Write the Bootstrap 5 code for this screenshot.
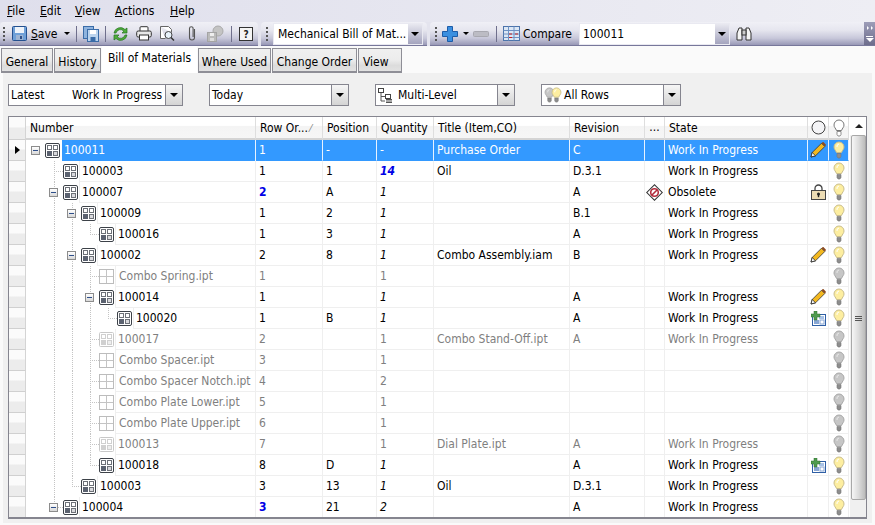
<!DOCTYPE html>
<html lang="en">
<head>
<meta charset="utf-8">
<title>Bill of Materials</title>
<link href="https://cdn.jsdelivr.net/npm/bootstrap@5.3.0/dist/css/bootstrap.min.css" rel="stylesheet">
<style>
html,body{margin:0;height:525px;overflow:hidden}
body{font-family:"DejaVu Sans Condensed","DejaVu Sans",sans-serif;font-stretch:condensed;font-size:12px;line-height:16px;color:#000;background:#fafafa}
.appmenu{height:22px;background:linear-gradient(90deg,#dfdfec,#eeeef4);padding-left:7px;gap:0}
.appmenu span{display:block}
.mi1{width:33px}.mi2{width:35px}.mi3{width:40px}.mi4{width:55px}
.toolrow{height:24px;background:#e4e4ee;gap:3px}
.toolseg{height:24px;border-radius:4px 4px 0 0;background:linear-gradient(#f0f0f6 0,#e6e6ef 35%,#c8c8da 70%,#9898b6 100%);border-bottom:1px solid #77779a;padding-left:3px}
.sg1{width:258px}.sg2{width:166px}.sg3{flex:1 1 0;border-radius:4px 0 0 0}
.grip{width:2px;height:14px;background-image:repeating-linear-gradient(#555 0 2px,transparent 2px 4px);flex:none}
.tsep{width:1px;height:16px;background:#6f6f8c;flex:none}
.tcombo{background:#fff;height:22px;display:flex;align-items:center;padding-left:4px;border:1px solid #e9e9f1}
.tc1{width:150px;margin-left:5px}.tc2{width:151px;margin-left:7px;padding-left:3px}
.tarrow{margin-left:auto;width:14px;height:20px;background:linear-gradient(#e8e8f0,#a4a4be);display:flex;align-items:center;justify-content:center}
.tri{width:0;height:0;border-left:4px solid transparent;border-right:4px solid transparent;border-top:4px solid #000;display:block}
.tri2{border-left-width:3px;border-right-width:3px;border-top-width:3px}
.g2{margin-left:2px}.g3{margin-left:3px}.g4{margin-left:4px}.g5{margin-left:5px}.g6{margin-left:6px}.g7{margin-left:7px}.g8{margin-left:8px}.g10{margin-left:10px}.g12{margin-left:12px}
.endcap{margin-left:auto;width:11px;height:23px;background:linear-gradient(#9d9db8,#6d6d8c);display:flex;flex-direction:column;align-items:center;padding:4px 0 3px}
.endcap .chev{display:flex;gap:2px;margin-bottom:auto}
.endcap .chev em{display:block;width:0;height:0;border-top:2px solid transparent;border-bottom:2px solid transparent;border-left:2px solid #fff}
.endcap i{display:block;width:7px;height:1px;background:#fff;margin-bottom:1px}
.endcap b{display:block;width:0;height:0;border-left:4px solid transparent;border-right:4px solid transparent;border-top:4px solid #fff}
.bomtabs{height:27px;padding-left:1px;border:0;gap:1px;background:#fafafa}
.bomtabs .nav-link{height:25px;margin:2px 0 0;padding:5px 0 0;text-align:center;border:1px solid #8e8e96;border-width:1px 1px 2px;border-radius:0;color:#000;font-size:12px;line-height:16px;background:linear-gradient(#f0f0f0 0,#ececec 50%,#dcdcdc 75%,#e2e2e2 100%)}
.bomtabs .nav-link.active{height:27px;margin-top:0;background:#fff;border:0;padding-top:4px;color:#000}
.bomtabs .nav-link.tw6{text-align:left;padding-left:4px}
.tw1{width:52px}.tw2{width:47px}.tw3{width:95px}.tw4{width:73px}.tw5{width:85px}.tw6{width:44px}
.mainpane{height:450px;margin:0 3px;padding:0 0 0 5px;background:#f0f0f0}
.filterrow{height:43px;padding-top:11px}
.fcombo{height:22px;background:#fff;border:1px solid #85858f;display:flex;align-items:center;padding-left:2px;width:140px;flex:none}
.fc1{width:175px}
.fspace{margin-left:26px}
.flab{width:61px}
.farrow{margin-left:auto;width:17px;height:20px;border-left:1px solid #85858f;background:linear-gradient(#f6f6f6,#d4d4d4);display:flex;align-items:center;justify-content:center}
.gridbox{width:859px;height:403px;border:1px solid #85858f;border-bottom-width:2px;background:#fff;overflow:hidden}
.bom{table-layout:fixed;width:840px;margin:0;border-collapse:separate;border-spacing:0;--bs-table-bg:transparent;--bs-table-color:#000;font-size:12px}
.bom>:not(caption)>*>*{padding:1px 0 0 3px;border:0;border-right:1px solid #efefef;border-bottom:1px solid #efefef;height:21px;line-height:19px;white-space:nowrap;overflow:hidden;box-shadow:none}
.bom>thead>tr>th{font-weight:400;height:22px;line-height:19px;background:linear-gradient(#fff 0,#fff 40%,#f4f4f4 45%,#f6f6f6 100%);border-right:1px solid #dedede;border-bottom:2px solid #d4d4d4;padding:2px 0 0 4px}
.bom td.rowhd,.bom th.rowhd{padding:0;background:linear-gradient(#fbfbfb 0,#fbfbfb 45%,#ececec 50%,#ececec 100%);border-right:1px solid #d4d4d4;border-bottom:1px solid #d0d0d0;text-align:center}
.bom td.numc{padding:0;border-bottom:0}
.bom td.icn,.bom th.icn{padding:0;text-align:center;vertical-align:middle}
.treecell{display:flex;height:21px;align-items:stretch;padding-left:1px}
.gut{width:18px;flex:none;background-repeat:no-repeat;display:flex;align-items:center;justify-content:center}
.gv{background-image:repeating-linear-gradient(#c4c4c4 0 1px,transparent 1px 2px);background-size:1px 100%;background-position:9px 0}
.gt{background-image:repeating-linear-gradient(#c4c4c4 0 1px,transparent 1px 2px),repeating-linear-gradient(90deg,#c4c4c4 0 1px,transparent 1px 2px);background-size:1px 100%,9px 1px;background-position:9px 0,9px 10px}
.gl{background-image:repeating-linear-gradient(#c4c4c4 0 1px,transparent 1px 2px),repeating-linear-gradient(90deg,#c4c4c4 0 1px,transparent 1px 2px);background-size:1px 11px,9px 1px;background-position:9px 0,9px 10px}
.expd{width:9px;height:9px;border:1px solid #8c8c8c;background:linear-gradient(#fff,#d8d8d8);display:flex;align-items:center;justify-content:center;margin:0 1px 0 0}
.expd i{display:block;width:5px;height:1px;background:#2e4f8a}
.ticon{flex:none;align-self:center}
.tname{flex:1 1 0;min-width:0;margin-left:1px;padding:1px 0 0 2px;border-left:1px solid #efefef;border-bottom:1px solid #efefef;line-height:19px;overflow:hidden}
.tname.fnm{padding-left:3px}
.selrow>td{background:#3399ff;color:#fff;border-right-color:#e8f2ff!important;border-bottom-color:#3399ff!important}
.selrow>td.rowhd{color:#000;background:linear-gradient(#fbfbfb 0,#fbfbfb 45%,#ececec 50%,#ececec 100%);border-bottom-color:#d0d0d0!important;border-right-color:#d4d4d4!important}
.selrow>td.numc{background:#fff}
.selrow .tname{background:#3399ff;color:#fff;border-color:#3399ff;margin-left:2px;padding-left:2px;border-left:0}
.dim{color:#7f7f7f}
.dimrow>td,.dimrow .tname{color:#7f7f7f}
.blu{color:#0000e6;font-weight:700}
.qi{font-style:italic}
.qb{font-style:italic;font-weight:700;color:#0000e6}
.arrowr{display:inline-block;width:0;height:0;border-top:4px solid transparent;border-bottom:4px solid transparent;border-left:5px solid #000;vertical-align:middle}
.scrollbar{width:17px;height:400px;margin-left:1px;background:#f0f0f0;flex:none}
.sbtn{height:18px;display:flex;align-items:center;justify-content:center;background:#fff}
.uptri{width:0;height:0;border-left:4px solid transparent;border-right:4px solid transparent;border-bottom:4px solid #222;display:block}
.sthumb{height:365px;margin:0 1px;background:linear-gradient(90deg,#f6f6f6,#dcdcdc 50%,#bcbcbc);border:1px solid #a8a8a8;border-radius:2px;display:flex;flex-direction:column;align-items:center;padding-top:180px}
.sthumb i{display:block;width:7px;height:1px;background:#555;margin-bottom:1px}
</style>
</head>
<body>
<svg width="0" height="0" class="d-none">
<defs>
<symbol id="elem" viewBox="0 0 15 15"><rect x=".5" y=".5" width="14" height="14" rx="1.5" fill="#fff" stroke="#3c4148"/><rect x="2.5" y="2.5" width="4" height="4" fill="#fff" stroke="#6d7178"/><rect x="8.5" y="2.5" width="4" height="4" fill="#fff" stroke="#6d7178"/><rect x="2" y="8" width="5" height="5" fill="#5b6270"/><rect x="8.5" y="8.5" width="4" height="4" fill="#d8d8dc" stroke="#6d7178"/></symbol>
<symbol id="elemg" viewBox="0 0 15 15"><rect x=".5" y=".5" width="14" height="14" rx="1" fill="#fff" stroke="#c8c8c8"/><rect x="2.5" y="2.5" width="4" height="4" fill="#fff" stroke="#d0d0d0"/><rect x="8.5" y="2.5" width="4" height="4" fill="#fff" stroke="#d0d0d0"/><rect x="2" y="8" width="5" height="5" fill="#d0d0d0"/><rect x="8.5" y="8.5" width="4" height="4" fill="#eee" stroke="#d0d0d0"/></symbol>
<symbol id="filei" viewBox="0 0 15 15"><rect x=".5" y=".5" width="14" height="14" fill="#fff" stroke="#bcbcbc"/><path d="M7.5 1v13M1 7.5h13" stroke="#c4c4c4"/></symbol>
<symbol id="bulb" viewBox="0 0 12 18"><path d="M6 1a5 5 0 0 0-5 5c0 2.200 1.700 3.300 2.500 5.500h5C9.300 9.300 11 8.200 11 6a5 5 0 0 0-5-5z" fill="#fdeea0" stroke="#c9bd8c"/><path d="M4 12.500h4v3l-1 1.500H5l-1-1.500z" fill="#8d8d8d" stroke="#777" stroke-width=".6"/><path d="M4 6a2.500 2.500 0 0 1 2-3" stroke="#fff" fill="none"/></symbol>
<symbol id="bulbg" viewBox="0 0 12 18"><path d="M6 1a5 5 0 0 0-5 5c0 2.200 1.700 3.300 2.500 5.500h5C9.300 9.300 11 8.200 11 6a5 5 0 0 0-5-5z" fill="#c6c6c6" stroke="#a8a8a8"/><path d="M4 12.500h4v3l-1 1.500H5l-1-1.500z" fill="#8d8d8d" stroke="#777" stroke-width=".6"/><path d="M4 6a2.500 2.500 0 0 1 2-3" stroke="#e8e8e8" fill="none"/></symbol>
<symbol id="bulbo" viewBox="0 0 12 18"><path d="M6 1a5 5 0 0 0-5 5c0 2.200 1.700 3.300 2.500 5.500h5C9.300 9.300 11 8.200 11 6a5 5 0 0 0-5-5z" fill="#fff" stroke="#777"/><path d="M4 12.500h4v3l-1 1.500H5l-1-1.500z" fill="#fff" stroke="#666" stroke-width=".7"/></symbol>
<symbol id="pencil" viewBox="0 0 16 16"><path d="M1 15l1.200-4.500L11.500 1.200l3.300 3.300L5.500 13.800z" fill="#f3b81f" stroke="#333" stroke-width=".8"/><path d="M1 15l1.200-4.500 3.300 3.300z" fill="#fff" stroke="#222" stroke-width=".8"/><path d="M11.500 1.200l3.300 3.300 .8-.8c.4-.5.4-1 0-1.500l-1.800-1.800c-.5-.4-1-.4-1.500 0z" fill="#8a4a20"/></symbol>
<symbol id="lock" viewBox="0 0 15 16"><path d="M4 7V4.500a3.500 3.500 0 0 1 7 0V7" fill="none" stroke="#444" stroke-width="1.300"/><rect x=".5" y="6.500" width="14" height="9" fill="#ecdcb4" stroke="#444"/><circle cx="7.500" cy="10" r="1.500" fill="#222"/><rect x="6.800" y="10" width="1.400" height="3.200" fill="#222"/></symbol>
<symbol id="obs" viewBox="0 0 17 17"><rect x="3" y="3" width="11" height="11" transform="rotate(45 8.500 8.500)" fill="#fff" stroke="#333"/><circle cx="8.500" cy="8.500" r="3.800" fill="#fff" stroke="#b22a3a" stroke-width="1.600"/><path d="M6 11l5-5" stroke="#b22a3a" stroke-width="1.600"/></symbol>
<symbol id="addi" viewBox="0 0 15 15"><rect x="1.500" y="3.500" width="13" height="11" fill="#fff" stroke="#2f5fa5"/><rect x="3" y="9" width="5" height="4" fill="#88a6d3"/><rect x="9" y="9" width="4" height="4" fill="#fff" stroke="#88a6d3"/><rect x="8" y="5" width="5" height="3" fill="#a8c2e6"/><path d="M3 0h3v3h3v3H6v3H3V6H0V3h3z" fill="#4f9a4f" stroke="#2f6f2f" stroke-width=".5"/></symbol>
<symbol id="mlv" viewBox="0 0 15 15"><path d="M3 5v8h4M3 8.500h4" fill="none" stroke="#555"/><rect x=".5" y=".5" width="5" height="4" fill="#fff" stroke="#444"/><rect x="7.500" y="6.500" width="5" height="4" fill="#fff" stroke="#444"/><path d="M8 13h6M8 11.500h6M8 14.500h6" stroke="#555"/></symbol>
</defs>
</svg>

<div class="appmenu d-flex align-items-center">
<span class="mi1"><u>F</u>ile</span><span class="mi2"><u>E</u>dit</span><span class="mi3"><u>V</u>iew</span><span class="mi4"><u>A</u>ctions</span><span><u>H</u>elp</span>
</div>

<div class="toolrow d-flex">
<div class="toolseg sg1 d-flex align-items-center">
<span class="grip"></span>
<svg class="g7" width="15" height="15" viewBox="0 0 15 15"><rect x=".5" y=".5" width="14" height="14" rx="1" fill="#6fa0d8" stroke="#24508f"/><rect x="3" y="1" width="9" height="6" fill="#eef3fa"/><rect x="4" y="9" width="7" height="5" fill="#9fb4d2"/><rect x="8" y="10" width="2" height="3" fill="#2d4f88"/></svg>
<span class="g4"><u>S</u>ave</span>
<span class="tri tri2 g6"></span>
<span class="tsep g6"></span>
<svg class="g6" width="16" height="16" viewBox="0 0 16 16"><rect x=".5" y=".5" width="10" height="12" fill="#8eb3de" stroke="#3a6ca8"/><rect x="4.500" y="3.500" width="11" height="12" fill="#bcd4ee" stroke="#3a6ca8"/><rect x="7" y="4" width="6" height="4" fill="#fff"/><rect x="7.500" y="11" width="5" height="4" fill="#3a6ca8"/></svg>
<span class="tsep g6"></span>
<svg class="g6" width="17" height="16" viewBox="0 0 17 16"><path d="M2 7a6.500 6.500 0 0 1 11-3.500L15 2v5h-5l1.800-1.800A4.500 4.500 0 0 0 4 7z" fill="#4fae3a" stroke="#24701f" stroke-width=".7"/><path d="M15 9A6.500 6.500 0 0 1 4 12.500L2 14V9h5l-1.800 1.800A4.500 4.500 0 0 0 13 9z" fill="#4fae3a" stroke="#24701f" stroke-width=".7"/></svg>
<svg class="g7" width="16" height="15" viewBox="0 0 16 15"><rect x="4" y=".7" width="8" height="5" rx="1" fill="#fff" stroke="#333"/><rect x=".7" y="5" width="14.600" height="6" rx="1.500" fill="#e8e8e8" stroke="#333"/><rect x="3.500" y="9" width="9" height="5" fill="#fff" stroke="#333"/></svg>
<svg class="g8" width="15" height="15" viewBox="0 0 15 15"><path d="M.5.5h8l3 3v3M.5.500v12h5" fill="#fff" stroke="#666"/><circle cx="8.500" cy="9" r="3.500" fill="#e8f2fa" stroke="#444"/><path d="M11 11.500l3 3" stroke="#333" stroke-width="1.500"/></svg>
<svg class="g12" width="10" height="17" viewBox="0 0 10 17"><path d="M7.500 4v8.500a2.500 2.500 0 0 1-5 0V3.500a1.800 1.800 0 0 1 3.600 0V12" fill="none" stroke="#555" stroke-width="1.100"/></svg>
<svg class="g10" width="17" height="17" viewBox="0 0 17 17"><circle cx="11" cy="6" r="5" fill="#c4c4c4" stroke="#aaa"/><rect x=".5" y="7.500" width="9" height="9" fill="#bbb" stroke="#a4a4a4"/><rect x="3" y="8" width="4" height="3" fill="#eee"/><rect x="3" y="13" width="4" height="3" fill="#ddd"/></svg>
<span class="tsep g7"></span>
<svg class="g7" width="14" height="14" viewBox="0 0 14 14"><rect x=".5" y=".5" width="13" height="13" fill="#f4f4f4" stroke="#333"/><text x="7" y="11" text-anchor="middle" font-size="10" font-weight="700" fill="#222">?</text></svg>
</div>
<div class="toolseg sg2 d-flex align-items-center">
<span class="grip g2"></span>
<div class="tcombo tc1">Mechanical Bill of Mat...<span class="tarrow"><span class="tri"></span></span></div>
</div>
<div class="toolseg sg3 d-flex align-items-center">
<span class="grip g2"></span>
<svg class="g5" width="16" height="16" viewBox="0 0 16 16"><path d="M5.500.5h5v5h5v5h-5v5h-5v-5h-5v-5h5z" fill="#3a8fe0" stroke="#1d5ca8"/></svg>
<span class="tri tri2 g5"></span>
<svg class="g4" width="16" height="6" viewBox="0 0 16 6"><rect x=".5" y=".5" width="15" height="5" rx="1" fill="#bcbcc4" stroke="#a8a8b0"/></svg>
<span class="tsep g7"></span>
<svg class="g6" width="17" height="15" viewBox="0 0 17 15"><rect x=".5" y=".5" width="16" height="14" fill="#dce7f5" stroke="#4d74ab"/><path d="M.5 4.500h16M.5 8h16M.5 11.500h16M5.500.5v14M11 .5v14" stroke="#6e92c4"/><path d="M6 8h3M12 8h3M6 11.500h3" stroke="#c82020"/></svg>
<span class="g3">Compare</span>
<div class="tcombo tc2">100011<span class="tarrow"><span class="tri"></span></span></div>
<svg class="g6" width="16" height="16" viewBox="0 0 16 16"><path d="M1 14V7l2-5h3v12zM15 14V7l-2-5h-3v12z" fill="#f4f4f4" stroke="#333"/><rect x="6" y="4" width="4" height="5" fill="#ccc" stroke="#333"/></svg>
<div class="endcap"><span class="chev"><em></em><em></em></span><i></i><b></b></div>
</div>
</div>

<ul class="nav nav-tabs bomtabs">
<li class="nav-item"><a class="nav-link tw1" href="#">General</a></li>
<li class="nav-item"><a class="nav-link tw2" href="#">History</a></li>
<li class="nav-item"><a class="nav-link active tw3" href="#">Bill of Materials</a></li>
<li class="nav-item"><a class="nav-link tw4" href="#">Where Used</a></li>
<li class="nav-item"><a class="nav-link tw5" href="#">Change Order</a></li>
<li class="nav-item"><a class="nav-link tw6" href="#">View</a></li>
</ul>

<div class="mainpane">
<div class="filterrow d-flex">
<div class="fcombo fc1"><span class="flab">Latest</span><span>Work In Progress</span><span class="farrow"><span class="tri"></span></span></div>
<div class="fcombo fspace">Today<span class="farrow"><span class="tri"></span></span></div>
<div class="fcombo fspace"><svg width="15" height="15"><use href="#mlv"/></svg><span class="g5">Multi-Level</span><span class="farrow"><span class="tri"></span></span></div>
<div class="fcombo fspace"><svg width="18" height="16" viewBox="0 0 18 16"><use href="#bulbg" width="11" height="16"/><use href="#bulb" x="7" width="11" height="16"/></svg><span class="g2">All Rows</span><span class="farrow"><span class="tri"></span></span></div>
</div>

<div class="gridbox d-flex">
<table class="table bom">
<colgroup><col style="width:17px"><col style="width:230px"><col style="width:67px"><col style="width:54px"><col style="width:57px"><col style="width:136px"><col style="width:75px"><col style="width:20px"><col style="width:143px"><col style="width:21px"><col style="width:20px"></colgroup>
<thead><tr><th class="rowhd"></th><th>Number</th><th>Row Or...&#8201;<small class="dim">&#8260;</small></th><th>Position</th><th>Quantity</th><th>Title (Item,CO)</th><th>Revision</th><th class="icn">...</th><th>State</th><th class="icn"><svg width="15" height="15" viewBox="0 0 15 15"><circle cx="7.500" cy="7.500" r="6.500" fill="#f4f4f6" stroke="#444"/></svg></th><th class="icn"><svg width="12" height="18"><use href="#bulbo"/></svg></th></tr></thead>
<tbody>
<tr class="selrow"><td class="rowhd"><span class="arrowr"></span></td><td class="numc"><div class="treecell"><span class="gut"><span class="expd"><i></i></span></span><svg class="ticon" width="15" height="15"><use href="#elem"/></svg><div class="tname">100011</div></div></td><td>1</td><td>-</td><td>-</td><td>Purchase Order</td><td>C</td><td></td><td>Work In Progress</td><td class="icn"><svg width="16" height="16"><use href="#pencil"/></svg></td><td class="icn"><svg width="12" height="18"><use href="#bulb"/></svg></td></tr>

<tr><td class="rowhd"></td><td class="numc"><div class="treecell"><span class="gut"></span><span class="gut gt"></span><svg class="ticon" width="15" height="15"><use href="#elem"/></svg><div class="tname">100003</div></div></td><td>1</td><td>1</td><td class="qb">14</td><td>Oil</td><td>D.3.1</td><td></td><td>Work In Progress</td><td class="icn"></td><td class="icn"><svg width="12" height="18"><use href="#bulb"/></svg></td></tr>

<tr><td class="rowhd"></td><td class="numc"><div class="treecell"><span class="gut"></span><span class="gut gv"><span class="expd"><i></i></span></span><svg class="ticon" width="15" height="15"><use href="#elem"/></svg><div class="tname">100007</div></div></td><td class="blu">2</td><td>A</td><td class="qi">1</td><td></td><td>A</td><td class="icn"><svg width="17" height="17"><use href="#obs"/></svg></td><td>Obsolete</td><td class="icn"><svg width="15" height="16"><use href="#lock"/></svg></td><td class="icn"><svg width="12" height="18"><use href="#bulb"/></svg></td></tr>

<tr><td class="rowhd"></td><td class="numc"><div class="treecell"><span class="gut"></span><span class="gut gv"></span><span class="gut gv"><span class="expd"><i></i></span></span><svg class="ticon" width="15" height="15"><use href="#elem"/></svg><div class="tname">100009</div></div></td><td>1</td><td>2</td><td class="qi">1</td><td></td><td>B.1</td><td></td><td>Work In Progress</td><td class="icn"></td><td class="icn"><svg width="12" height="18"><use href="#bulb"/></svg></td></tr>

<tr><td class="rowhd"></td><td class="numc"><div class="treecell"><span class="gut"></span><span class="gut gv"></span><span class="gut gv"></span><span class="gut gl"></span><svg class="ticon" width="15" height="15"><use href="#elem"/></svg><div class="tname">100016</div></div></td><td>1</td><td>3</td><td class="qi">1</td><td></td><td>A</td><td></td><td>Work In Progress</td><td class="icn"></td><td class="icn"><svg width="12" height="18"><use href="#bulb"/></svg></td></tr>

<tr><td class="rowhd"></td><td class="numc"><div class="treecell"><span class="gut"></span><span class="gut gv"></span><span class="gut gv"><span class="expd"><i></i></span></span><svg class="ticon" width="15" height="15"><use href="#elem"/></svg><div class="tname">100002</div></div></td><td>2</td><td>8</td><td class="qi">1</td><td>Combo Assembly.iam</td><td>B</td><td></td><td>Work In Progress</td><td class="icn"><svg width="16" height="16"><use href="#pencil"/></svg></td><td class="icn"><svg width="12" height="18"><use href="#bulb"/></svg></td></tr>

<tr class="dimrow"><td class="rowhd"></td><td class="numc"><div class="treecell"><span class="gut"></span><span class="gut gv"></span><span class="gut gv"></span><span class="gut gt"></span><svg class="ticon" width="15" height="15"><use href="#filei"/></svg><div class="tname fnm">Combo Spring.ipt</div></div></td><td>1</td><td></td><td>1</td><td></td><td></td><td></td><td></td><td class="icn"></td><td class="icn"><svg width="12" height="18"><use href="#bulbg"/></svg></td></tr>

<tr><td class="rowhd"></td><td class="numc"><div class="treecell"><span class="gut"></span><span class="gut gv"></span><span class="gut gv"></span><span class="gut gv"><span class="expd"><i></i></span></span><svg class="ticon" width="15" height="15"><use href="#elem"/></svg><div class="tname">100014</div></div></td><td>1</td><td></td><td class="qi">1</td><td></td><td>A</td><td></td><td>Work In Progress</td><td class="icn"><svg width="16" height="16"><use href="#pencil"/></svg></td><td class="icn"><svg width="12" height="18"><use href="#bulb"/></svg></td></tr>

<tr><td class="rowhd"></td><td class="numc"><div class="treecell"><span class="gut"></span><span class="gut gv"></span><span class="gut gv"></span><span class="gut gv"></span><span class="gut gl"></span><svg class="ticon" width="15" height="15"><use href="#elem"/></svg><div class="tname">100020</div></div></td><td>1</td><td>B</td><td class="qi">1</td><td></td><td>A</td><td></td><td>Work In Progress</td><td class="icn"><svg width="15" height="15"><use href="#addi"/></svg></td><td class="icn"><svg width="12" height="18"><use href="#bulb"/></svg></td></tr>

<tr class="dimrow"><td class="rowhd"></td><td class="numc"><div class="treecell"><span class="gut"></span><span class="gut gv"></span><span class="gut gv"></span><span class="gut gt"></span><svg class="ticon" width="15" height="15"><use href="#elemg"/></svg><div class="tname">100017</div></div></td><td>2</td><td></td><td>1</td><td>Combo Stand-Off.ipt</td><td>A</td><td></td><td>Work In Progress</td><td class="icn"></td><td class="icn"><svg width="12" height="18"><use href="#bulbg"/></svg></td></tr>

<tr class="dimrow"><td class="rowhd"></td><td class="numc"><div class="treecell"><span class="gut"></span><span class="gut gv"></span><span class="gut gv"></span><span class="gut gt"></span><svg class="ticon" width="15" height="15"><use href="#filei"/></svg><div class="tname fnm">Combo Spacer.ipt</div></div></td><td>3</td><td></td><td>1</td><td></td><td></td><td></td><td></td><td class="icn"></td><td class="icn"><svg width="12" height="18"><use href="#bulbg"/></svg></td></tr>

<tr class="dimrow"><td class="rowhd"></td><td class="numc"><div class="treecell"><span class="gut"></span><span class="gut gv"></span><span class="gut gv"></span><span class="gut gt"></span><svg class="ticon" width="15" height="15"><use href="#filei"/></svg><div class="tname fnm">Combo Spacer Notch.ipt</div></div></td><td>4</td><td></td><td>2</td><td></td><td></td><td></td><td></td><td class="icn"></td><td class="icn"><svg width="12" height="18"><use href="#bulbg"/></svg></td></tr>

<tr class="dimrow"><td class="rowhd"></td><td class="numc"><div class="treecell"><span class="gut"></span><span class="gut gv"></span><span class="gut gv"></span><span class="gut gt"></span><svg class="ticon" width="15" height="15"><use href="#filei"/></svg><div class="tname fnm">Combo Plate Lower.ipt</div></div></td><td>5</td><td></td><td>1</td><td></td><td></td><td></td><td></td><td class="icn"></td><td class="icn"><svg width="12" height="18"><use href="#bulbg"/></svg></td></tr>

<tr class="dimrow"><td class="rowhd"></td><td class="numc"><div class="treecell"><span class="gut"></span><span class="gut gv"></span><span class="gut gv"></span><span class="gut gt"></span><svg class="ticon" width="15" height="15"><use href="#filei"/></svg><div class="tname fnm">Combo Plate Upper.ipt</div></div></td><td>6</td><td></td><td>1</td><td></td><td></td><td></td><td></td><td class="icn"></td><td class="icn"><svg width="12" height="18"><use href="#bulbg"/></svg></td></tr>

<tr class="dimrow"><td class="rowhd"></td><td class="numc"><div class="treecell"><span class="gut"></span><span class="gut gv"></span><span class="gut gv"></span><span class="gut gt"></span><svg class="ticon" width="15" height="15"><use href="#elemg"/></svg><div class="tname">100013</div></div></td><td>7</td><td></td><td>1</td><td>Dial Plate.ipt</td><td>A</td><td></td><td>Work In Progress</td><td class="icn"></td><td class="icn"><svg width="12" height="18"><use href="#bulbg"/></svg></td></tr>

<tr><td class="rowhd"></td><td class="numc"><div class="treecell"><span class="gut"></span><span class="gut gv"></span><span class="gut gv"></span><span class="gut gl"></span><svg class="ticon" width="15" height="15"><use href="#elem"/></svg><div class="tname">100018</div></div></td><td>8</td><td>D</td><td class="qi">1</td><td></td><td>A</td><td></td><td>Work In Progress</td><td class="icn"><svg width="15" height="15"><use href="#addi"/></svg></td><td class="icn"><svg width="12" height="18"><use href="#bulb"/></svg></td></tr>

<tr><td class="rowhd"></td><td class="numc"><div class="treecell"><span class="gut"></span><span class="gut gv"></span><span class="gut gl"></span><svg class="ticon" width="15" height="15"><use href="#elem"/></svg><div class="tname">100003</div></div></td><td>3</td><td>13</td><td class="qi">1</td><td>Oil</td><td>D.3.1</td><td></td><td>Work In Progress</td><td class="icn"></td><td class="icn"><svg width="12" height="18"><use href="#bulb"/></svg></td></tr>

<tr><td class="rowhd"></td><td class="numc"><div class="treecell"><span class="gut"></span><span class="gut gl"><span class="expd"><i></i></span></span><svg class="ticon" width="15" height="15"><use href="#elem"/></svg><div class="tname">100004</div></div></td><td class="blu">3</td><td>21</td><td class="qi">2</td><td></td><td>A</td><td></td><td>Work In Progress</td><td class="icn"></td><td class="icn"><svg width="12" height="18"><use href="#bulb"/></svg></td></tr>
</tbody>
</table>
<div class="scrollbar">
<div class="sbtn"><span class="uptri"></span></div>
<div class="sthumb"><i></i><i></i><i></i></div>
</div>
</div>
</div>
<script src="https://cdn.jsdelivr.net/npm/bootstrap@5.3.0/dist/js/bootstrap.bundle.min.js"></script>
</body>
</html>
